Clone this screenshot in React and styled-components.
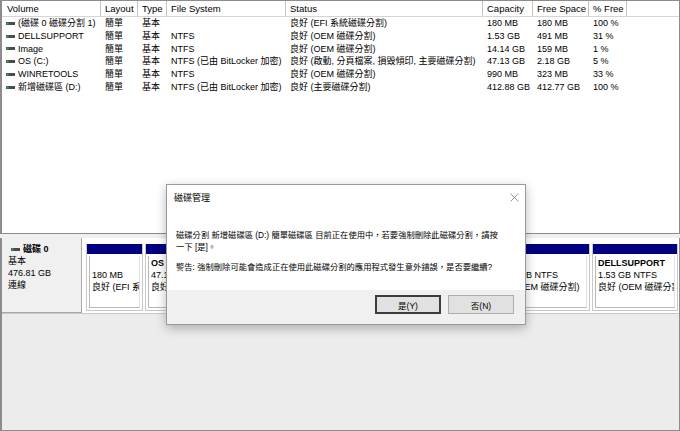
import styled, { createGlobalStyle } from 'styled-components';

const GlobalStyle = createGlobalStyle`
  html, body {
    margin: 0;
    padding: 0;
    background: #ffffff;
  }
  body {
    font-family: "Liberation Sans", "Noto Sans CJK TC", sans-serif;
    font-size: 9px;
    color: #000;
  }
`;

const columns = [
  { title: 'Volume', width: 99 },
  { title: 'Layout', width: 37 },
  { title: 'Type', width: 29 },
  { title: 'File System', width: 119 },
  { title: 'Status', width: 197 },
  { title: 'Capacity', width: 50 },
  { title: 'Free Space', width: 56 },
  { title: '% Free', width: 38 },
];

const volumes = [
  ['(磁碟 0 磁碟分割 1)', '簡單', '基本', '', '良好 (EFI 系統磁碟分割)', '180 MB', '180 MB', '100 %'],
  ['DELLSUPPORT', '簡單', '基本', 'NTFS', '良好 (OEM 磁碟分割)', '1.53 GB', '491 MB', '31 %'],
  ['Image', '簡單', '基本', 'NTFS', '良好 (OEM 磁碟分割)', '14.14 GB', '159 MB', '1 %'],
  ['OS (C:)', '簡單', '基本', 'NTFS (已由 BitLocker 加密)', '良好 (啟動, 分頁檔案, 損毀傾印, 主要磁碟分割)', '47.13 GB', '2.18 GB', '5 %'],
  ['WINRETOOLS', '簡單', '基本', 'NTFS', '良好 (OEM 磁碟分割)', '990 MB', '323 MB', '33 %'],
  ['新增磁碟區 (D:)', '簡單', '基本', 'NTFS (已由 BitLocker 加密)', '良好 (主要磁碟分割)', '412.88 GB', '412.77 GB', '100 %'],
];

const partitions = [
  { name: '', size: '180 MB', status: '良好 (EFI 系統磁碟分割)', width: 57 },
  { name: 'OS (C:)', size: '47.13 GB NTFS (已由 BitLocker 加密)', status: '良好 (啟動, 分頁檔案, 損毀傾印, 主要磁碟分割)', width: 150 },
  { name: 'WINRETOOLS', size: '990 MB NTFS', status: '良好 (OEM 磁碟分割)', width: 60 },
  { name: '新增磁碟區 (D:)', size: '412.88 GB NTFS (已由 BitLocker 加密)', status: '良好 (主要磁碟分割)', width: 127 },
  { name: 'Image', size: '14.14 GB NTFS', status: '良好 (OEM 磁碟分割)', width: 102 },
  { name: 'DELLSUPPORT', size: '1.53 GB NTFS', status: '良好 (OEM 磁碟分割)', width: 86 },
];

const gridTemplate = columns.map((c) => `${c.width}px`).join(' ') + ' 1fr';

function DriveIcon() {
  return (
    <svg width="9" height="5" viewBox="0 0 9 5">
      <rect x="0" y="1" width="9" height="3" fill="#4b4b4b" />
      <rect x="0.5" y="1.5" width="2" height="2" fill="#3daa4a" />
    </svg>
  );
}

function CloseIcon() {
  return (
    <svg width="9" height="9" viewBox="0 0 9 9">
      <path d="M0.5 0.5 L8.5 8.5 M8.5 0.5 L0.5 8.5" stroke="#7a7a7a" strokeWidth="0.8" fill="none" />
    </svg>
  );
}

function App() {
  return (
    <Window>
      <GlobalStyle />

      <TopPane>
        <HeaderRow>
          {columns.map((c) => (
            <HeaderCell key={c.title}>{c.title}</HeaderCell>
          ))}
          <HeaderCell />
        </HeaderRow>
        {volumes.map((row) => (
          <Row key={row[0]}>
            {row.map((value, i) =>
              i === 0 ? (
                <VolumeCell key={i}>
                  <DriveIcon />
                  <span>{value}</span>
                </VolumeCell>
              ) : (
                <Cell key={i}>{value}</Cell>
              )
            )}
            <Cell />
          </Row>
        ))}
      </TopPane>

      <Splitter />

      <BottomPane>
        <DiskRow>
          <DiskLabel>
            <DiskName>
              <DriveIcon />
              <span>磁碟 0</span>
            </DiskName>
            <div>基本</div>
            <div>476.81 GB</div>
            <div>連線</div>
          </DiskLabel>
          <PartitionStrip>
            {partitions.map((p) => (
              <Partition key={p.size} $width={p.width}>
                <PartitionBar />
                <PartitionBody>
                  <PartName>{p.name || '\u00a0'}</PartName>
                  <PartLine>{p.size}</PartLine>
                  <PartLine>{p.status}</PartLine>
                </PartitionBody>
              </Partition>
            ))}
          </PartitionStrip>
        </DiskRow>
      </BottomPane>

      <Dialog>
        <TitleBar>
          <span>磁碟管理</span>
          <CloseIcon />
        </TitleBar>
        <DialogBody>
          <p>
            磁碟分割 新增磁碟區 (D:) 簡單磁碟區 目前正在使用中，若要強制刪除此磁碟分割，請按
            <br />
            一下 [是]。
          </p>
          <p>警告: 強制刪除可能會造成正在使用此磁碟分割的應用程式發生意外錯誤，是否要繼續?</p>
        </DialogBody>
        <DialogFooter>
          <Button $primary type="button">是(Y)</Button>
          <Button type="button">否(N)</Button>
        </DialogFooter>
      </Dialog>
    </Window>
  );
}

export default App;

const Window = styled.div`
  position: relative;
  width: 680px;
  height: 431px;
  display: flex;
  flex-direction: column;
  background: #f0f0f0;
  overflow: hidden;
`;

const TopPane = styled.div`
  height: 234px;
  box-sizing: border-box;
  background: #ffffff;
  border: 1px solid #8c8c8c;
  border-left-width: 2px;
  flex-shrink: 0;
`;

const HeaderRow = styled.div`
  display: grid;
  grid-template-columns: ${gridTemplate};
  height: 15px;
  border-bottom: 1px solid #d5d5d5;
`;

const HeaderCell = styled.div`
  padding-left: 4px;
  line-height: 15px;
  font-size: 9.5px;
  border-right: 1px solid #c4c4c4;
  white-space: nowrap;
  overflow: hidden;
  &:first-child {
    padding-left: 5px;
  }
  &:last-child {
    border-right: none;
  }
`;

const Row = styled.div`
  display: grid;
  grid-template-columns: ${gridTemplate};
  height: 12.8px;
  line-height: 12.8px;
  &:first-of-type {
    margin-top: 1px;
  }
`;

const Cell = styled.div`
  padding-left: 4px;
  white-space: nowrap;
  overflow: hidden;
`;

const VolumeCell = styled.div`
  display: flex;
  align-items: center;
  gap: 3px;
  padding-left: 4px;
  white-space: nowrap;
  overflow: hidden;
  svg {
    flex-shrink: 0;
  }
`;

const Splitter = styled.div`
  height: 4px;
  flex-shrink: 0;
`;

const BottomPane = styled.div`
  flex: 1;
  background: #ececec;
  border: 1px solid #8c8c8c;
  border-left-width: 2px;
  border-top: none;
`;

const DiskRow = styled.div`
  display: flex;
  height: 75px;
  background: #ffffff;
  border-bottom: 1px solid #c8c8c8;
`;

const DiskLabel = styled.div`
  width: 80px;
  flex-shrink: 0;
  box-sizing: border-box;
  padding: 5px 0 0 6px;
  background: #f0f0f0;
  border-right: 1px solid #a8a8a8;
  border-bottom: 1px solid #a8a8a8;
  line-height: 12px;
`;

const DiskName = styled.div`
  display: flex;
  align-items: center;
  gap: 3px;
  padding-left: 3px;
  font-weight: bold;
`;

const PartitionStrip = styled.div`
  flex: 1;
  display: flex;
  gap: 2px;
  padding: 6px 2px 2px 4px;
  overflow: hidden;
`;

const Partition = styled.div`
  width: ${({ $width }) => $width}px;
  flex-shrink: 0;
  box-sizing: border-box;
  display: flex;
  flex-direction: column;
  border: 1px solid #c8c8c8;
  border-top: none;
`;

const PartitionBar = styled.div`
  height: 10px;
  background: #000080;
  flex-shrink: 0;
`;

const PartitionBody = styled.div`
  flex: 1;
  margin: 2px;
  padding: 1px 0 0 2px;
  border: 1px solid #b8b8b8;
  border-top: none;
  border-right-color: #e0e0e0;
  overflow: hidden;
  line-height: 12px;
`;

const PartName = styled.div`
  font-weight: bold;
  white-space: nowrap;
`;

const PartLine = styled.div`
  white-space: nowrap;
`;

const Dialog = styled.div`
  position: absolute;
  left: 166px;
  top: 184px;
  width: 360px;
  height: 141px;
  box-sizing: border-box;
  display: flex;
  flex-direction: column;
  background: #ffffff;
  border: 1px solid #9a9a9a;
  box-shadow: 0 3px 10px rgba(0, 0, 0, 0.28);
`;

const TitleBar = styled.div`
  height: 25px;
  flex-shrink: 0;
  display: flex;
  align-items: center;
  justify-content: space-between;
  padding: 0 6px 0 7px;
  font-size: 9px;
`;

const DialogBody = styled.div`
  flex: 1;
  padding: 19px 10px 0 9px;
  font-size: 8.3px;
  line-height: 12px;
  p {
    margin: 0 0 8px 0;
  }
`;

const DialogFooter = styled.div`
  height: 34px;
  flex-shrink: 0;
  box-sizing: border-box;
  display: flex;
  justify-content: flex-end;
  align-items: flex-start;
  gap: 7px;
  padding: 5px 11px 0 0;
  background: #f0f0f0;
`;

const Button = styled.button`
  width: 66px;
  height: 19px;
  box-sizing: border-box;
  padding: 0;
  font-family: "Liberation Sans", "Noto Sans CJK TC", sans-serif;
  font-size: 8.5px;
  color: #000;
  background: #e1e1e1;
  border: ${({ $primary }) => ($primary ? '2px solid #3c3c3c' : '1px solid #adadad')};
  border-radius: 0;
`;
